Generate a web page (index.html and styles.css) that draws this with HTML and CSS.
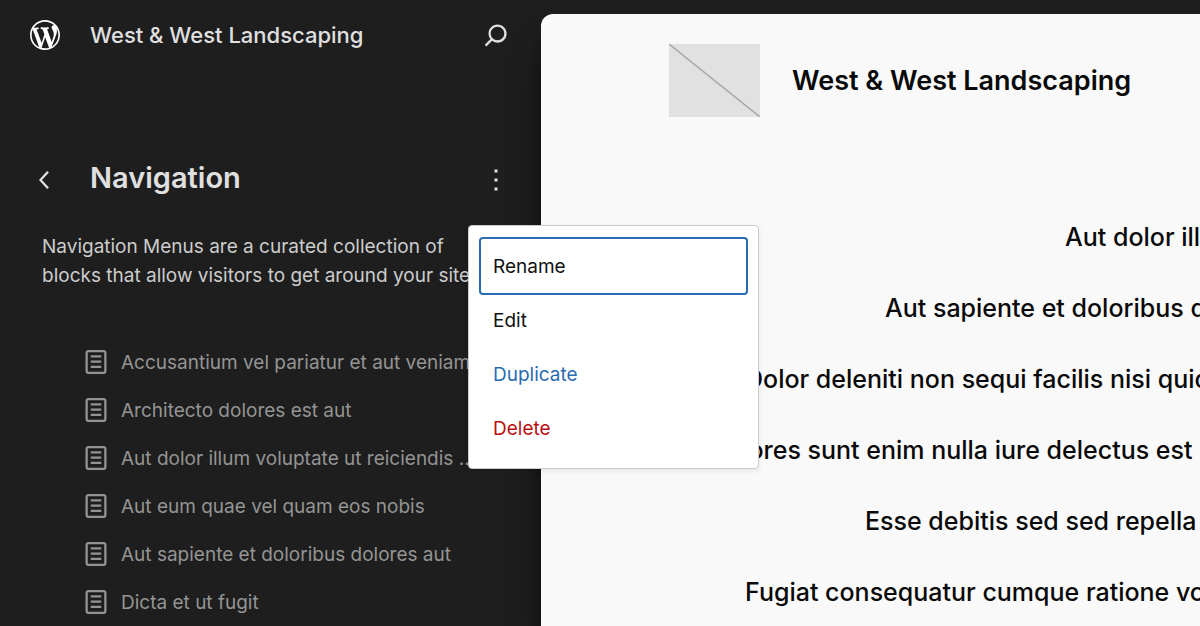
FILE: index.html
```html
<!DOCTYPE html>
<html lang="en">
<head>
<meta charset="utf-8">
<title>Navigation</title>
<link rel="stylesheet" href="styles.css">
</head>
<body>
<svg class="sprite" aria-hidden="true">
  <symbol id="page" viewBox="0 0 24 24">
    <path d="M15.5 7.5h-7V9h7V7.5Zm-7 3.5h7v1.5h-7V11Zm7 3.5h-7V16h7v-1.5Z"/>
    <path fill-rule="evenodd" d="M17 4H7a2 2 0 0 0-2 2v12a2 2 0 0 0 2 2h10a2 2 0 0 0 2-2V6a2 2 0 0 0-2-2ZM7 5.5h10a.5.5 0 0 1 .5.5v12a.5.5 0 0 1-.5.5H7a.5.5 0 0 1-.5-.5V6a.5.5 0 0 1 .5-.5Z"/>
  </symbol>
</svg>
<div class="editor">
  <aside class="sidebar">
    <header class="hub">
      <a class="logo" href="#" aria-label="Dashboard">
        <svg class="icon" viewBox="-2 -2 24 24"><path d="M20 10c0-5.51-4.49-10-10-10C4.48 0 0 4.49 0 10c0 5.52 4.48 10 10 10 5.51 0 10-4.48 10-10zM7.78 15.37L4.37 6.22c.55-.02 1.17-.08 1.17-.08.5-.06.44-1.13-.06-1.11 0 0-1.45.11-2.37.11-.18 0-.37 0-.58-.01C4.12 2.69 6.87 1.11 10 1.11c2.33 0 4.45.87 6.05 2.34-.68-.11-1.65.39-1.65 1.58 0 .74.45 1.36.9 2.1.35.61.55 1.36.55 2.46 0 1.49-1.4 5-1.4 5l-3.03-8.37c.54-.02.82-.17.82-.17.5-.05.44-1.25-.06-1.22 0 0-1.44.12-2.38.12-.87 0-2.33-.12-2.33-.12-.5-.03-.56 1.2-.06 1.22l.92.08 1.26 3.41zM17.41 10c.24-.64.74-1.87.43-4.25.7 1.29 1.05 2.71 1.05 4.25 0 3.29-1.73 6.24-4.4 7.78.97-2.59 1.94-5.2 2.92-7.78zM6.1 18.09C3.12 16.65 1.11 13.53 1.11 10c0-1.3.23-2.48.72-3.59C3.25 10.3 4.67 14.2 6.1 18.09zm4.03-6.63l2.58 6.98c-.86.29-1.76.45-2.71.45-.79 0-1.57-.11-2.29-.33.81-2.38 1.62-4.74 2.42-7.1z"/></svg>
      </a>
      <span class="site">West &amp; West Landscaping</span>
      <button class="tool" type="button" aria-label="Search">
        <svg class="icon" viewBox="0 0 24 24"><path d="M13 5c-3.3 0-6 2.7-6 6 0 1.4.5 2.7 1.3 3.7l-3.8 3.8 1.1 1.1 3.8-3.8c1 .8 2.3 1.3 3.7 1.3 3.3 0 6-2.7 6-6S16.3 5 13 5zm0 10.5c-2.5 0-4.5-2-4.5-4.5s2-4.5 4.5-4.5 4.5 2 4.5 4.5-2 4.5-4.5 4.5z"/></svg>
      </button>
    </header>
    <div class="heading">
      <button class="tool" type="button" aria-label="Back">
        <svg class="icon" viewBox="0 0 24 24"><path d="M14.6 7l-1.2-1L8 12l5.4 6 1.2-1-4.6-5z"/></svg>
      </button>
      <h1 class="title">Navigation</h1>
      <div class="actions">
        <button class="tool" type="button" aria-label="Actions" aria-haspopup="menu" aria-expanded="true">
          <svg class="icon" viewBox="0 0 24 24"><path d="M13 19h-2v-2h2v2zm0-6h-2v-2h2v2zm0-6h-2V5h2v2z"/></svg>
        </button>
        <div class="menu" role="menu">
          <button class="item focused" type="button" role="menuitem">Rename</button>
          <button class="item" type="button" role="menuitem">Edit</button>
          <button class="item accent" type="button" role="menuitem">Duplicate</button>
          <button class="item danger" type="button" role="menuitem">Delete</button>
        </div>
      </div>
    </div>
    <p class="description">Navigation Menus are a curated collection of blocks that allow visitors to get around your site.</p>
    <nav class="pages" aria-label="Pages">
      <a class="page" href="#"><svg class="icon"><use href="#page"/></svg><span class="label">Accusantium vel pariatur et aut veniam</span></a>
      <a class="page" href="#"><svg class="icon"><use href="#page"/></svg><span class="label">Architecto dolores est aut</span></a>
      <a class="page" href="#"><svg class="icon"><use href="#page"/></svg><span class="label">Aut dolor illum voluptate ut reiciendis ...</span></a>
      <a class="page" href="#"><svg class="icon"><use href="#page"/></svg><span class="label">Aut eum quae vel quam eos nobis</span></a>
      <a class="page" href="#"><svg class="icon"><use href="#page"/></svg><span class="label">Aut sapiente et doloribus dolores aut</span></a>
      <a class="page" href="#"><svg class="icon"><use href="#page"/></svg><span class="label">Dicta et ut fugit</span></a>
    </nav>
  </aside>
  <main class="canvas">
    <header class="brand">
      <svg class="placeholder" viewBox="0 0 91 73" aria-hidden="true"><rect width="91" height="73" fill="#e1e1e1"/><path d="M0 0l91 73" stroke="#a8a8a8" stroke-width="1.5"/></svg>
      <h2 class="brand-name">West &amp; West Landscaping</h2>
    </header>
    <nav class="links" aria-label="Site">
      <a class="link indent-5" href="#">Aut dolor illum</a>
      <a class="link indent-4" href="#">Aut sapiente et doloribus dolores aut</a>
      <a class="link indent-2" href="#">Dolor deleniti non sequi facilis nisi quidem</a>
      <a class="link indent-1" href="#">Dolores sunt enim nulla iure delectus est</a>
      <a class="link indent-3" href="#">Esse debitis sed sed repella</a>
      <a class="link indent-2" href="#">Fugiat consequatur cumque ratione voluptas</a>
    </nav>
  </main>
</div>
</body>
</html>
```
FILE: styles.css
```css
* { box-sizing: border-box; }
body {
  margin: 0;
  background: #1e1e1e;
  font-family: Inter, "Liberation Sans", sans-serif;
  overflow: hidden;
}
button {
  border: 0;
  padding: 0;
  background: none;
  color: inherit;
  font: inherit;
}
a { color: inherit; text-decoration: none; }
.sprite { display: none; }
.editor { display: flex; min-height: 100vh; }
.icon { display: block; flex: none; width: 36px; height: 36px; fill: currentColor; }
.sidebar {
  flex: 0 0 541px;
  min-width: 0;
  color: #e0e0e0;
}
.hub, .heading {
  display: grid;
  grid-template-columns: 36px 1fr 36px;
  column-gap: 27px;
  align-items: start;
  padding: 0 27px;
}
.hub { padding-top: 17px; }
.logo { color: #fff; }
.site { font-size: 22px; font-weight: 500; line-height: 37px; }
.heading { padding-top: 108px; }
.title { margin: 0; font-size: 29px; font-weight: 600; line-height: 32px; }
.actions { position: relative; }
.tool { display: block; }
.description {
  margin: 0;
  padding: 34px 48px 0 42px;
  color: #ccc;
  font-size: 19px;
  line-height: 29px;
}
.pages {
  display: flex;
  flex-direction: column;
  padding: 48px 60px 0 78px;
  color: #949494;
  font-size: 19px;
}
.page { display: flex; align-items: center; gap: 7px; height: 48px; white-space: nowrap; }

.menu {
  position: absolute;
  z-index: 2;
  top: 63px;
  left: -10px;
  width: 291px;
  padding: 13px 12px;
  border: 1px solid #ccc;
  border-radius: 4px;
  background: #fff;
  box-shadow: 0 2px 6px rgba(0, 0, 0, .08);
  color: #111;
}
.item {
  display: block;
  width: 100%;
  height: 54px;
  padding: 0 12px;
  border-radius: 2px;
  text-align: left;
  font-size: 19px;
}
.focused { box-shadow: 0 0 0 2px #2a6cb0; }
.accent { color: #2a6cb0; }
.danger { color: #b81010; }

.canvas {
  flex: 1;
  min-width: 0;
  margin-top: 14px;
  border-top-left-radius: 12px;
  background: #f9f9f9;
  box-shadow: 0 30px 37px -8px rgba(0, 0, 0, .8), 0 12px 15px -9px rgba(0, 0, 0, .8);
  color: #0a0a0a;
  overflow: hidden;
}
.brand {
  display: flex;
  align-items: center;
  gap: 32px;
  padding: 30px 0 0 128px;
}
.placeholder { display: block; width: 91px; height: 73px; }
.brand-name { margin: 0; font-size: 27px; font-weight: 600; line-height: 40px; white-space: nowrap; }
.links { padding-top: 85px; font-size: 25px; font-weight: 500; }
.link { display: block; line-height: 71px; white-space: nowrap; }
.indent-1 { padding-left: 168px; }
.indent-2 { padding-left: 204px; }
.indent-3 { padding-left: 324px; }
.indent-4 { padding-left: 344px; }
.indent-5 { padding-left: 524px; }
```
